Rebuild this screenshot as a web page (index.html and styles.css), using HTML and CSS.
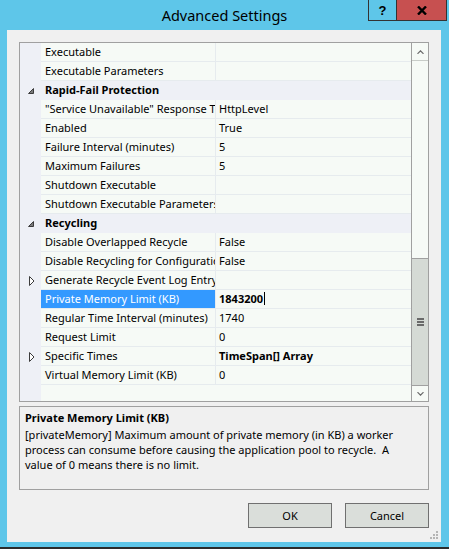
FILE: index.html
```html
<!DOCTYPE html>
<html>
<head>
<meta charset="utf-8">
<title>Advanced Settings</title>
<link rel="stylesheet" href="styles.css">
</head>
<body>
<div class="window">
  <div class="titlebar">
    <div class="title">Advanced Settings</div>
    <div class="caption-buttons">
      <div class="btn-help">?</div>
      <div class="btn-close">
        <svg width="10" height="9" viewBox="0 0 10 9"><path d="M1 0.5 L9 8.5 M9 0.5 L1 8.5" stroke="#000" stroke-width="2.4" fill="none"/></svg>
      </div>
    </div>
  </div>
  <div class="client">
    <div class="grid">
      <div class="rows">
        <div class="row"><div class="gut"></div><div class="name">Executable</div><div class="val"></div></div>
        <div class="row"><div class="gut"></div><div class="name">Executable Parameters</div><div class="val"></div></div>
        <div class="row cat"><div class="gut"><svg class="tri-open" width="6" height="6" viewBox="0 0 6 6"><polygon points="5.5,0.5 5.5,5.5 0.5,5.5" fill="#7a7a7a" stroke="#3c3c3c" stroke-width="1"/></svg></div><div class="name">Rapid-Fail Protection</div><div class="val"></div></div>
        <div class="row"><div class="gut"></div><div class="name">"Service Unavailable" Response Type</div><div class="val">HttpLevel</div></div>
        <div class="row"><div class="gut"></div><div class="name">Enabled</div><div class="val">True</div></div>
        <div class="row"><div class="gut"></div><div class="name">Failure Interval (minutes)</div><div class="val">5</div></div>
        <div class="row"><div class="gut"></div><div class="name">Maximum Failures</div><div class="val">5</div></div>
        <div class="row"><div class="gut"></div><div class="name">Shutdown Executable</div><div class="val"></div></div>
        <div class="row"><div class="gut"></div><div class="name">Shutdown Executable Parameters</div><div class="val"></div></div>
        <div class="row cat"><div class="gut"><svg class="tri-open" width="6" height="6" viewBox="0 0 6 6"><polygon points="5.5,0.5 5.5,5.5 0.5,5.5" fill="#7a7a7a" stroke="#3c3c3c" stroke-width="1"/></svg></div><div class="name">Recycling</div><div class="val"></div></div>
        <div class="row"><div class="gut"></div><div class="name">Disable Overlapped Recycle</div><div class="val">False</div></div>
        <div class="row"><div class="gut"></div><div class="name">Disable Recycling for Configuration Changes</div><div class="val">False</div></div>
        <div class="row"><div class="gut"><svg class="tri-closed" width="6" height="10" viewBox="0 0 6 10"><polygon points="0.5,0.5 5,5 0.5,9.5" fill="#fff" stroke="#3c3c3c" stroke-width="1"/></svg></div><div class="name">Generate Recycle Event Log Entry</div><div class="val"></div></div>
        <div class="row sel"><div class="gut"></div><div class="name">Private Memory Limit (KB)</div><div class="val edit">1843200<span class="caret"></span></div></div>
        <div class="row"><div class="gut"></div><div class="name">Regular Time Interval (minutes)</div><div class="val">1740</div></div>
        <div class="row"><div class="gut"></div><div class="name">Request Limit</div><div class="val">0</div></div>
        <div class="row"><div class="gut"><svg class="tri-closed" width="6" height="10" viewBox="0 0 6 10"><polygon points="0.5,0.5 5,5 0.5,9.5" fill="#fff" stroke="#3c3c3c" stroke-width="1"/></svg></div><div class="name">Specific Times</div><div class="val bold">TimeSpan[] Array</div></div>
        <div class="row"><div class="gut"></div><div class="name">Virtual Memory Limit (KB)</div><div class="val">0</div></div>
      </div>
      <div class="scroll">
        <div class="sb-up"><svg width="7" height="4" viewBox="0 0 7 4"><polyline points="0.5,3.8 3.5,0.8 6.5,3.8" fill="none" stroke="#6a6a6a" stroke-width="1.2"/></svg></div>
        <div class="sb-track"></div>
        <div class="sb-thumb"><span class="grip"></span><span class="grip"></span><span class="grip"></span></div>
        <div class="sb-down"><svg width="7" height="4" viewBox="0 0 7 4"><polyline points="0.5,0.2 3.5,3.2 6.5,0.2" fill="none" stroke="#6a6a6a" stroke-width="1.2"/></svg></div>
      </div>
    </div>
    <div class="desc">
      <div class="desc-title">Private Memory Limit (KB)</div>
      <div class="desc-text">[privateMemory] Maximum amount of private memory (in KB) a worker<br>process can consume before causing the application pool to recycle.&nbsp; A<br>value of 0 means there is no limit.</div>
    </div>
    <div class="footer">
      <div class="button">OK</div>
      <div class="button">Cancel</div>
    </div>
    <svg class="size-grip" width="8" height="8" viewBox="0 0 8 8">
      <rect x="6" y="0" width="2" height="2" fill="#b5b5b5"/>
      <rect x="3" y="3" width="2" height="2" fill="#b5b5b5"/>
      <rect x="6" y="3" width="2" height="2" fill="#b5b5b5"/>
      <rect x="0" y="6" width="2" height="2" fill="#b5b5b5"/>
      <rect x="3" y="6" width="2" height="2" fill="#b5b5b5"/>
      <rect x="6" y="6" width="2" height="2" fill="#b5b5b5"/>
    </svg>
  </div>
</div>
</body>
</html>
```
FILE: styles.css
```css
* { box-sizing: border-box; }

body {
  margin: 0;
  font-family: "Segoe UI", "Noto Sans", "Open Sans", sans-serif;
  font-size: 11px;
  color: #000;
}

.window {
  width: 449px;
  height: 549px;
  background: #5ec6e9;
  border-bottom: 2px solid #2b2b2b;
  display: flex;
  flex-direction: column;
}

.titlebar {
  height: 30px;
  flex: none;
  display: grid;
  grid-template-columns: 1fr auto 1fr;
}

.title {
  grid-column: 2;
  line-height: 30px;
  font-size: 14.5px;
  white-space: nowrap;
}

.caption-buttons {
  grid-column: 3;
  justify-self: end;
  align-self: start;
  display: flex;
  margin-right: 2px;
}

.btn-help {
  width: 28px;
  height: 21px;
  border-left: 1px solid #333;
  border-bottom: 1px solid #333;
  display: flex;
  align-items: center;
  justify-content: center;
  font: bold 13px "Liberation Sans", sans-serif;
}

.btn-close {
  width: 51px;
  height: 21px;
  border: 1px solid #333;
  border-top: 0;
  background: #c75050;
  display: flex;
  align-items: center;
  justify-content: center;
}

.client {
  position: relative;
  margin: 0 8px 0 7px;
  height: 512px;
  flex: none;
  background: #f0f0f0;
  padding: 12px 12px 0;
  display: flex;
  flex-direction: column;
}

.grid {
  height: 360px;
  flex: none;
  border: 1px solid #a0a0a0;
  display: flex;
}

.rows {
  width: 391px;
  flex: none;
  background: linear-gradient(to right, #eef0f6 21px, #f6faf6 21px);
}

.row {
  display: flex;
  height: 19px;
}

.gut {
  width: 21px;
  flex: none;
  display: flex;
  align-items: center;
  padding-left: 8px;
}

.tri-closed { margin-left: 1px; }

.name {
  width: 175px;
  flex: none;
  border-right: 1px solid #e6ebee;
  border-bottom: 1px solid #e6ebee;
  padding-left: 4px;
  line-height: 18px;
  white-space: nowrap;
  overflow: hidden;
  background: #f6faf6;
}

.val {
  flex: 1;
  border-bottom: 1px solid #e6ebee;
  padding-left: 3px;
  line-height: 18px;
  white-space: nowrap;
  overflow: hidden;
  background: #f6faf6;
}

.cat .name,
.cat .val {
  background: #eef0f6;
  border-right: 0;
  border-bottom-color: #eef0f6;
}

.cat .name { font-weight: bold; }

.sel .name {
  background: #3399ff;
  color: #fff;
}

.bold, .edit { font-weight: bold; }

.caret {
  display: inline-block;
  width: 1px;
  height: 13px;
  background: #000;
  vertical-align: -2px;
  margin-left: 1px;
}

.scroll {
  width: 17px;
  flex: none;
  border-left: 1px solid #a0a0a0;
  display: flex;
  flex-direction: column;
  background: #f6faf6;
}

.sb-up {
  height: 18px;
  border-bottom: 1px solid #c8ccc8;
  display: flex;
  align-items: center;
  justify-content: center;
}

.sb-track { flex: 1; }

.sb-thumb {
  height: 127px;
  background: #d5dad5;
  border-top: 1px solid #a0a0a0;
  display: flex;
  flex-direction: column;
  align-items: center;
  justify-content: center;
  gap: 1px;
}

.grip {
  width: 7px;
  height: 2px;
  background: #6a6a6a;
}

.sb-down {
  height: 16px;
  border-top: 1px solid #a0a0a0;
  display: flex;
  align-items: center;
  justify-content: center;
}

.desc {
  margin-top: 4px;
  height: 84px;
  flex: none;
  border: 1px solid #a0a0a0;
  padding: 1px 5px;
}

.desc-title {
  font-weight: bold;
  line-height: 19px;
}

.desc-text {
  line-height: 15px;
  white-space: nowrap;
}

.footer {
  margin-top: 13px;
  display: flex;
  justify-content: flex-end;
  gap: 13px;
}

.button {
  width: 84px;
  height: 25px;
  border: 1px solid #707070;
  background: #dadeda;
  display: flex;
  align-items: center;
  justify-content: center;
}

.size-grip {
  position: absolute;
  right: 3px;
  bottom: 3px;
}
```
